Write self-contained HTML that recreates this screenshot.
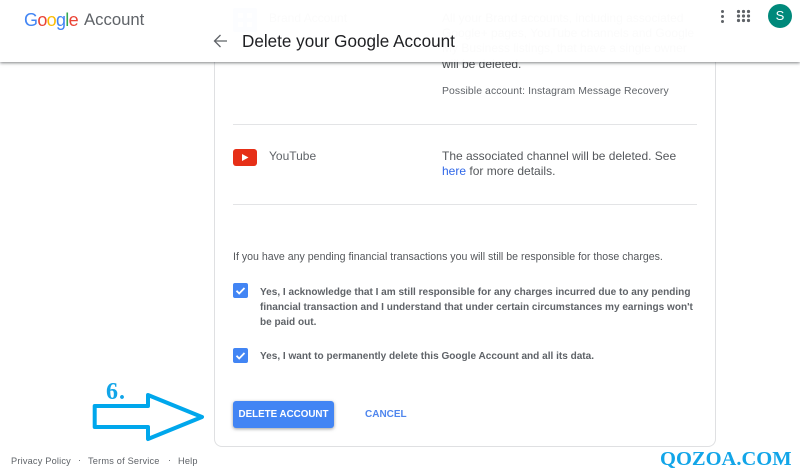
<!DOCTYPE html>
<html><head><meta charset="utf-8"><style>
html,body{margin:0;padding:0;background:#fff}
body{width:800px;height:469px;overflow:hidden;position:relative;font-family:"Liberation Sans",sans-serif;color:#5f6368}
.t{position:absolute;white-space:nowrap;line-height:15px}
.hr{position:absolute;left:233px;width:464px;height:1px;background:#e3e4e6}
.b{font-weight:bold;font-size:10.05px;color:#5f6368}
.cb{position:absolute;left:233px;width:15px;height:15px;background:#4285f4;border-radius:2px}
</style></head><body>
<div style="position:absolute;left:214px;top:0;width:500px;height:446px;border:1px solid #dfe0e2;border-top:0;border-radius:0 0 8px 8px"></div>

<svg style="position:absolute;left:233px;top:8px" width="24" height="24"><rect width="24" height="24" rx="2" fill="#4285f4" opacity=".75"/><path d="M5 5h5v5H5zM14 5h5v5h-5zM5 14h5v5H5zM14 14h5v5h-5z" fill="#fff"/></svg>
<div class="t" style="left:269px;top:11px;font-size:12px">Brand Account</div>
<div class="t" style="left:442px;top:11px;font-size:12px;color:#55585c">All your Brand accounts, including associated</div>
<div class="t" style="left:442px;top:26px;font-size:12px;color:#55585c">Google+ pages, YouTube channels and Google</div>
<div class="t" style="left:442px;top:41px;font-size:12px;color:#55585c">My Business listings, that have a single owner</div>
<div class="t" style="left:442px;top:57px;font-size:12px;color:#4a4d50">will be deleted.</div>
<div class="t" style="left:442px;top:84px;font-size:10.4px;letter-spacing:.1px">Possible account: Instagram Message Recovery</div>
<div class="hr" style="top:124px"></div>

<svg style="position:absolute;left:233px;top:149px" width="24" height="17"><rect width="24" height="17" rx="3" fill="#e62f17"/><path d="M9 5v7l6.500-3.500z" fill="#fff"/></svg>
<div class="t" style="left:269px;top:149px;font-size:12px">YouTube</div>
<div class="t" style="left:442px;top:149px;font-size:12px;color:#55585c">The associated channel will be deleted. See</div>
<div class="t" style="left:442px;top:164px;font-size:12px;color:#55585c"><span style="color:#2f67e8">here</span> for more details.</div>
<div class="hr" style="top:204px"></div>

<div class="t" style="left:233px;top:250px;font-size:10.6px;color:#55585c">If you have any pending financial transactions you will still be responsible for those charges.</div>

<div class="cb" style="top:283px"></div>
<svg style="position:absolute;left:233px;top:283px" width="15" height="15"><path d="M3.500 7.800l2.700 2.700 5.300-5.500" fill="none" stroke="#fff" stroke-width="1.800"/></svg>
<div class="t b" style="left:260px;top:285px">Yes, I acknowledge that I am still responsible for any charges incurred due to any pending</div>
<div class="t b" style="left:260px;top:300px">financial transaction and I understand that under certain circumstances my earnings won't</div>
<div class="t b" style="left:260px;top:315px">be paid out.</div>

<div class="cb" style="top:348px"></div>
<svg style="position:absolute;left:233px;top:348px" width="15" height="15"><path d="M3.500 7.800l2.700 2.700 5.300-5.500" fill="none" stroke="#fff" stroke-width="1.800"/></svg>
<div class="t b" style="left:260px;top:349px">Yes, I want to permanently delete this Google Account and all its data.</div>

<div style="position:absolute;left:233px;top:401px;width:101px;height:27px;background:#4285f4;border-radius:3px;box-shadow:0 1px 3px rgba(60,64,67,.5);color:#fff;font-size:9.8px;font-weight:bold;line-height:27px;text-align:center;white-space:nowrap">DELETE ACCOUNT</div>
<div class="t" style="left:365px;top:407px;font-size:10px;font-weight:bold;color:#4f86ee">CANCEL</div>

<div class="t" style="left:11px;top:454px;font-size:9.200px;letter-spacing:.2px">Privacy Policy</div>
<div class="t" style="left:78px;top:453px;font-size:9px">·</div>
<div class="t" style="left:88px;top:454px;font-size:9.200px;letter-spacing:.2px">Terms of Service</div>
<div class="t" style="left:168px;top:453px;font-size:9px">·</div>
<div class="t" style="left:178px;top:454px;font-size:9.200px;letter-spacing:.2px">Help</div>

<!-- header -->
<div style="position:absolute;left:0;top:0;width:800px;height:62px;background:rgba(255,255,255,.975);box-shadow:0 1px 3px rgba(60,64,67,.65)"></div>
<div class="t" style="left:24px;top:9px;font-size:18px;line-height:22px;letter-spacing:-.7px"><span style="color:#4285f4">G</span><span style="color:#ea4335">o</span><span style="color:#fbbc05">o</span><span style="color:#4285f4">g</span><span style="color:#34a853">l</span><span style="color:#ea4335">e</span></div>
<div class="t" style="left:84px;top:9px;font-size:16.700px;line-height:22px;color:#5f6368">Account</div>
<svg style="position:absolute;left:213px;top:33px" width="16" height="16"><path d="M14 8H1.500M7.500 2l-6 6 6 6" fill="none" stroke="#5f6368" stroke-width="1.300"/></svg>
<div class="t" style="left:242px;top:31px;font-size:17.100px;line-height:22px;color:#202124">Delete your Google Account</div>

<svg style="position:absolute;left:718px;top:9px" width="40" height="16" fill="#5f6368">
<circle cx="4.500" cy="2.500" r="1.500"/><circle cx="4.500" cy="7.500" r="1.500"/><circle cx="4.500" cy="12.500" r="1.500"/>
<circle cx="20.500" cy="2.500" r="1.600"/><circle cx="25.500" cy="2.500" r="1.600"/><circle cx="30.500" cy="2.500" r="1.600"/><circle cx="20.500" cy="7" r="1.600"/><circle cx="25.500" cy="7" r="1.600"/><circle cx="30.500" cy="7" r="1.600"/><circle cx="20.500" cy="11.500" r="1.600"/><circle cx="25.500" cy="11.500" r="1.600"/><circle cx="30.500" cy="11.500" r="1.600"/>
</svg>
<div style="position:absolute;left:768px;top:4px;width:24px;height:24px;border-radius:50%;background:#00897b;color:#fff;font-size:13px;line-height:24px;text-align:center">S</div>

<!-- annotations -->
<div class="t" style="left:106px;top:379px;font-family:'Liberation Serif',serif;font-weight:bold;font-size:24px;letter-spacing:1px;line-height:26px;color:#12a5e8">6.</div>
<svg style="position:absolute;left:90px;top:390px" width="118" height="54"><path d="M4.700 16H58V5L112 27 58 49V37H4.700z" fill="#fff" stroke="#00a7ec" stroke-width="4" stroke-linejoin="round"/></svg>
<div class="t" style="left:660px;top:449px;font-family:'Liberation Serif',serif;font-weight:bold;font-size:20.500px;line-height:21px;color:#12a5e8">QOZOA.COM</div>
</body></html>
